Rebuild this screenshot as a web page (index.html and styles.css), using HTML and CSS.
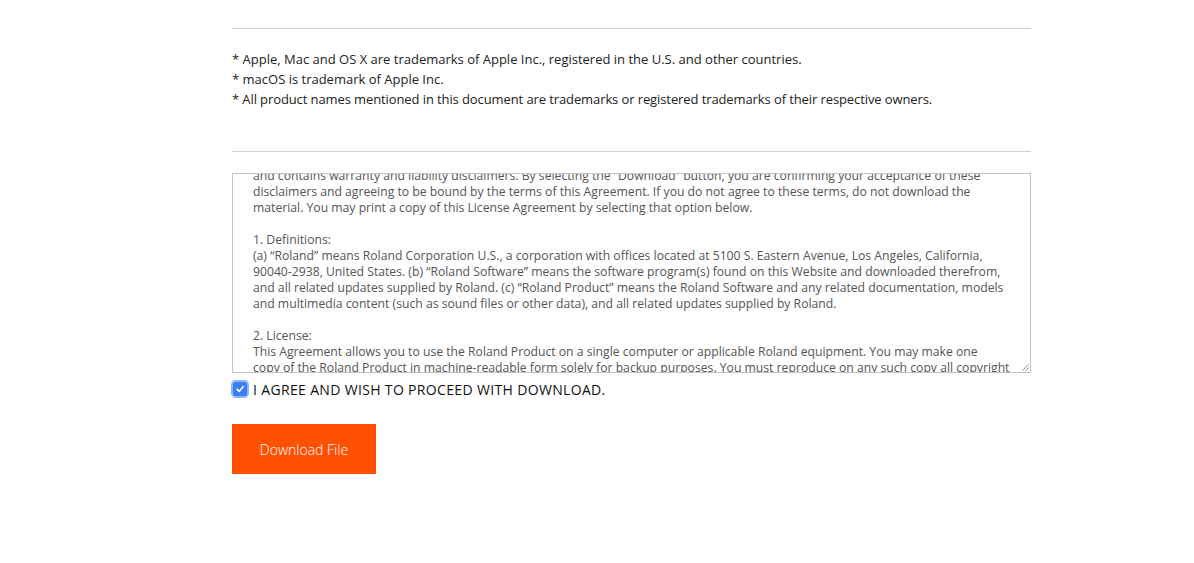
FILE: index.html
```html
<!DOCTYPE html>
<html>
<head>
<meta charset="utf-8">
<link rel="stylesheet" href="styles.css">
</head>
<body>
<main class="page">
  <hr class="rule rule-top">
  <div class="notes">
    <p>* Apple, Mac and OS X are trademarks of Apple Inc., registered in the U.S. and other countries.</p>
    <p>* macOS is trademark of Apple Inc.</p>
    <p class="narrow">* All product names mentioned in this document are trademarks or registered trademarks of their respective owners.</p>
  </div>
  <hr class="rule rule-bottom">
  <div class="license">
    <div class="license-text">
      <div class="ln">and contains warranty and liability disclaimers. By selecting the “Download” button, you are confirming your acceptance of these</div>
      <div class="ln">disclaimers and agreeing to be bound by the terms of this Agreement. If you do not agree to these terms, do not download the</div>
      <div class="ln">material. You may print a copy of this License Agreement by selecting that option below.</div>
      <div class="ln">&nbsp;</div>
      <div class="ln">1. Definitions:</div>
      <div class="ln">(a) “Roland” means Roland Corporation U.S., a corporation with offices located at 5100 S. Eastern Avenue, Los Angeles, California,</div>
      <div class="ln">90040-2938, United States. (b) “Roland Software” means the software program(s) found on this Website and downloaded therefrom,</div>
      <div class="ln">and all related updates supplied by Roland. (c) “Roland Product” means the Roland Software and any related documentation, models</div>
      <div class="ln">and multimedia content (such as sound files or other data), and all related updates supplied by Roland.</div>
      <div class="ln">&nbsp;</div>
      <div class="ln">2. License:</div>
      <div class="ln">This Agreement allows you to use the Roland Product on a single computer or applicable Roland equipment. You may make one</div>
      <div class="ln">copy of the Roland Product in machine-readable form solely for backup purposes. You must reproduce on any such copy all copyright</div>
    </div>
    <svg class="grip" width="8" height="8" viewBox="0 0 8 8"><path d="M7.5 1.5 L1.5 7.5 M7.5 4.5 L4.5 7.5" stroke="#8a8a8a" stroke-width="1" fill="none"/></svg>
  </div>
  <label class="agree">
    <span class="check"><svg width="10" height="10" viewBox="0 0 10 10"><path d="M2 5.2 L4.2 7.4 L8.2 2.4" stroke="#fff" stroke-width="1.6" fill="none" stroke-linecap="round" stroke-linejoin="round"/></svg></span>
    <span class="agree-text">I AGREE AND WISH TO PROCEED WITH DOWNLOAD.</span>
  </label>
  <button class="download">Download File</button>
</main>
</body>
</html>
```

FILE: styles.css
```css
html, body {
  margin: 0;
  padding: 0;
  background: #fff;
}
body {
  font-family: "Open Sans", "Lato", sans-serif;
  color: #222;
}
.page {
  width: 799px;
  margin: 0 0 0 232px;
  padding-top: 28px;
}
.rule {
  border: 0;
  border-top: 1px solid #cfcfcf;
  margin: 0;
}
.notes {
  padding: 20px 0 42px;
}
.notes p {
  margin: 0;
  font-size: 13px;
  line-height: 20px;
  color: #222;
}
.notes p.narrow {
  letter-spacing: -0.1px;
}
.license {
  position: relative;
  margin-top: 21px;
  height: 198px;
  border: 1px solid #c4c4c4;
  overflow: hidden;
}
.license-text {
  margin-top: -6px;
  padding-left: 20px;
  font-size: 12.2px;
  line-height: 16px;
  color: #555;
  white-space: nowrap;
}
.grip {
  position: absolute;
  right: 1px;
  bottom: 1px;
}
.agree {
  display: flex;
  align-items: center;
  height: 32px;
  gap: 6px;
}
.check {
  width: 14px;
  height: 14px;
  margin-left: 1px;
  border-radius: 3px;
  background: #3a7ef3;
  box-shadow: 0 0 0 2px #8db4f5;
  display: flex;
  align-items: center;
  justify-content: center;
}
.agree-text {
  font-size: 14px;
  color: #111;
  letter-spacing: 0.34px;
}
.download {
  display: block;
  margin-top: 19px;
  width: 144px;
  height: 50px;
  border: 0;
  border-radius: 0;
  background: #ff5003;
  color: #fff;
  font-family: "Open Sans", "Lato", sans-serif;
  font-size: 14px;
  font-weight: 300;
  padding: 0;
}
```
